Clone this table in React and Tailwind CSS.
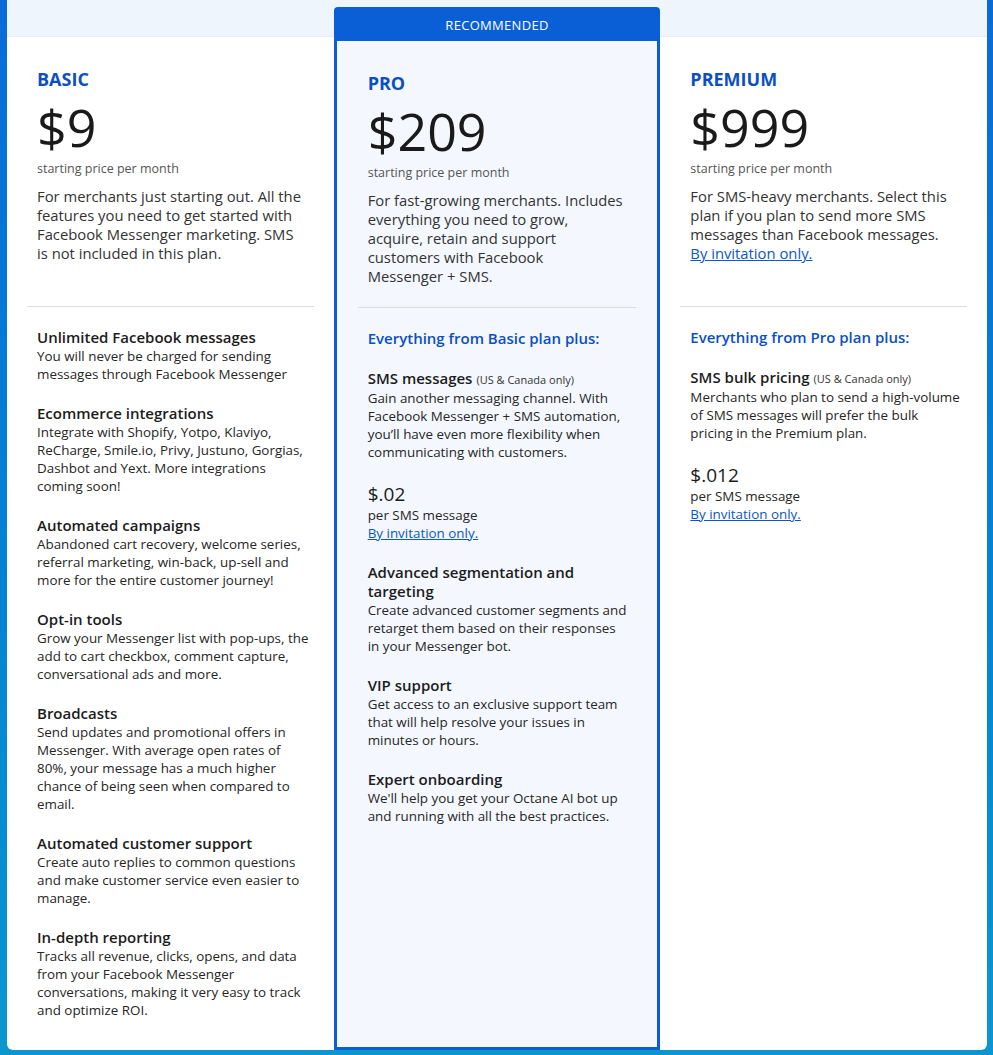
import React from 'react';

const basicFeatures = [
  { title: 'Unlimited Facebook messages', text: 'You will never be charged for sending messages through Facebook Messenger' },
  { title: 'Ecommerce integrations', text: 'Integrate with Shopify, Yotpo, Klaviyo, ReCharge, Smile.io, Privy, Justuno, Gorgias, Dashbot and Yext. More integrations coming soon!' },
  { title: 'Automated campaigns', text: 'Abandoned cart recovery, welcome series, referral marketing, win-back, up-sell and more for the entire customer journey!' },
  { title: 'Opt-in tools', text: 'Grow your Messenger list with pop-ups, the add to cart checkbox, comment capture, conversational ads and more.' },
  { title: 'Broadcasts', text: 'Send updates and promotional offers in Messenger. With average open rates of 80%, your message has a much higher chance of being seen when compared to email.' },
  { title: 'Automated customer support', text: 'Create auto replies to common questions and make customer service even easier to manage.' },
  { title: 'In-depth reporting', text: 'Tracks all revenue, clicks, opens, and data from your Facebook Messenger conversations, making it very easy to track and optimize ROI.' },
];

const Feature = ({ title, note, children }) => (
  <div>
    <h4 className="text-[15px] leading-[19px] font-semibold text-[#1c1c1c]">
      {title}
      {note && <span className="ml-1 text-[11px] font-normal text-[#333]">{note}</span>}
    </h4>
    <p className="text-[13.4px] leading-[18px] text-[#262626]">{children}</p>
  </div>
);

const SmsPrice = ({ price }) => (
  <div>
    <div className="text-[19px] leading-[24px] text-[#1c1c1c]">{price}</div>
    <div className="text-[13.4px] leading-[18px] text-[#262626]">per SMS message</div>
    <a href="#" className="block text-[13.4px] leading-[18px] text-[#0a57c9] underline">By invitation only.</a>
  </div>
);

const PlanHead = ({ name, price, children, className }) => (
  <div className={`px-[30px] pt-[31px] ${className}`}>
    <h3 className="text-[18px] leading-[22px] font-bold text-[#0b4fc3]">{name}</h3>
    <div className="mt-[6px] text-[52px] leading-[62px] text-[#1a1a1a]">{price}</div>
    <div className="mt-[2px] text-[12.5px] leading-[18px] text-[#555]">starting price per month</div>
    <div className="mt-[9px] text-[14.8px] leading-[19px] text-[#333]">{children}</div>
  </div>
);

const Divider = () => <div className="mx-[20px] h-px bg-[#dcdcdc]" />;

export default function App() {
  return (
    <div className="h-[1055px] bg-linear-to-b from-[#0a6bd8] to-[#0b96d0] pl-[7px] pr-[6px] pb-[5px] font-['Open_Sans',sans-serif]">
      <div className="flex h-full overflow-hidden rounded-b-md bg-white">
        {/* basic */}
        <div className="flex-1">
          <div className="h-[37px] border-b border-[#e4eef9] bg-[#eef5fd]" />
          <PlanHead name="BASIC" price="$9" className="h-[269px]">
            For merchants just starting out. All the features you need to get started with Facebook Messenger marketing. SMS is not included in this plan.
          </PlanHead>
          <Divider />
          <div className="flex flex-col gap-[21px] pl-[30px] pr-[22px] pt-[21px]">
            {basicFeatures.map((f) => (
              <Feature key={f.title} title={f.title}>{f.text}</Feature>
            ))}
          </div>
        </div>

        {/* pro */}
        <div className="flex flex-1 flex-col bg-[#eef5fd] pt-[7px]">
          <div className="flex flex-1 flex-col rounded-t-[4px] border-[3px] border-[#0a5fd6] bg-[#f4f8fe]">
            <div className="flex h-[31px] items-center justify-center bg-[#0a5fd6] text-[13px] tracking-[0.3px] text-white">RECOMMENDED</div>
            <PlanHead name="PRO" price="$209" className="h-[266px] pl-[31px] pr-[32px]">
              For fast-growing merchants. Includes everything you need to grow, acquire, retain and support customers with Facebook<br />Messenger + SMS.
            </PlanHead>
            <div className="mx-[21px] h-px bg-[#dcdcdc]" />
            <div className="flex flex-col gap-[21px] pl-[31px] pr-[27px] pt-[21px]">
              <div className="text-[15px] leading-[19px] font-semibold text-[#0b4fc3]">Everything from Basic plan plus:</div>
              <Feature title="SMS messages" note="(US & Canada only)">
                Gain another messaging channel. With Facebook Messenger + SMS automation, you’ll have even more flexibility when communicating with customers.
              </Feature>
              <SmsPrice price="$.02" />
              <Feature title="Advanced segmentation and targeting">
                Create advanced customer segments and retarget them based on their responses in your Messenger bot.
              </Feature>
              <Feature title="VIP support">
                Get access to an exclusive support team that will help resolve your issues in minutes or hours.
              </Feature>
              <Feature title="Expert onboarding">
                We'll help you get your Octane AI bot up and running with all the best practices.
              </Feature>
            </div>
          </div>
        </div>

        {/* premium */}
        <div className="flex-1">
          <div className="h-[37px] border-b border-[#e4eef9] bg-[#eef5fd]" />
          <PlanHead name="PREMIUM" price="$999" className="h-[269px]">
            For SMS-heavy merchants. Select this plan if you plan to send more SMS messages than Facebook messages.
            <a href="#" className="block text-[#0a57c9] underline">By invitation only.</a>
          </PlanHead>
          <Divider />
          <div className="flex flex-col gap-[21px] pl-[30px] pr-[25px] pt-[21px]">
            <div className="text-[15px] leading-[19px] font-semibold text-[#0b4fc3]">Everything from Pro plan plus:</div>
            <Feature title="SMS bulk pricing" note="(US & Canada only)">
              Merchants who plan to send a high-volume of SMS messages will prefer the bulk pricing in the Premium plan.
            </Feature>
            <SmsPrice price="$.012" />
          </div>
        </div>
      </div>
    </div>
  );
}
